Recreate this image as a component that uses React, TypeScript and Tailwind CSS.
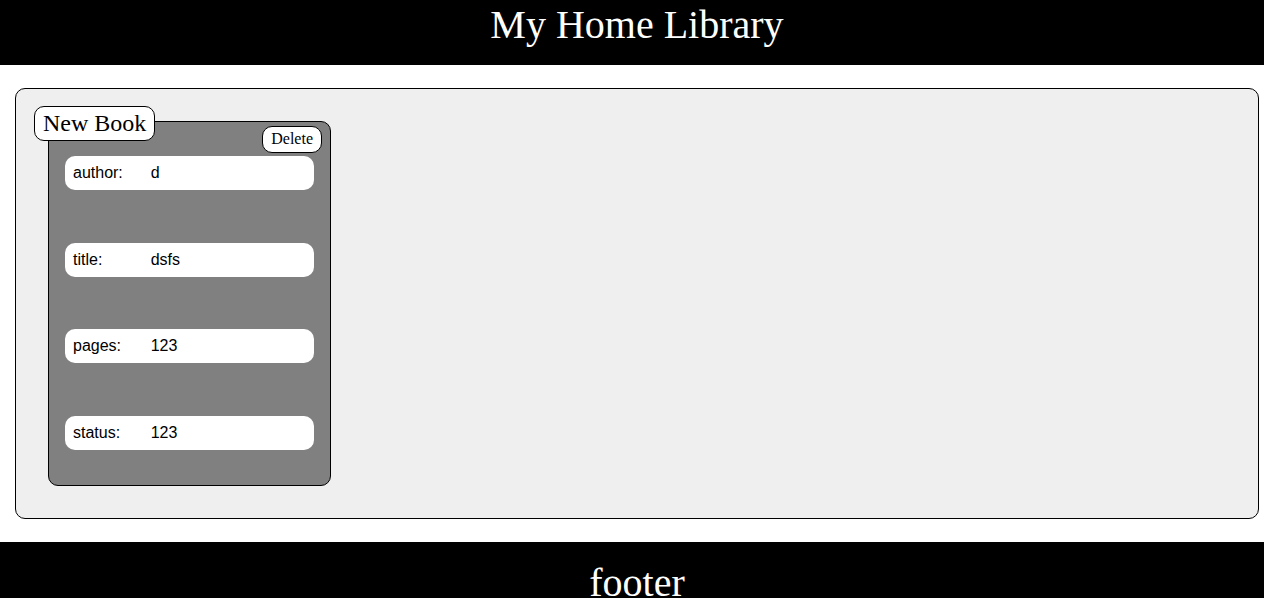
const details = [
  { label: "author:", value: "d" },
  { label: "title:", value: "dsfs" },
  { label: "pages:", value: "123" },
  { label: "status:", value: "123" },
];

function BookCard() {
  return (
    <article className="relative w-[283px] rounded-[10px] border border-black bg-[#808080] px-4 pb-[35px] pt-[34px]">
      <button
        type="button"
        className="absolute right-2 top-1 rounded-[10px] border border-black bg-white px-2 pb-px font-['Liberation_Serif',serif] text-base leading-6"
      >
        Delete
      </button>
      <dl className="flex min-h-[294px] flex-col justify-between font-['Liberation_Sans',sans-serif] text-base leading-[18px]">
        {details.map((item) => (
          <div key={item.label} className="flex rounded-[10px] bg-white p-2">
            <dt className="w-1/3">{item.label}</dt>
            <dd>{item.value}</dd>
          </div>
        ))}
      </dl>
    </article>
  );
}

export default function App() {
  return (
    <div className="flex min-h-screen flex-col bg-white font-['Liberation_Serif',serif] text-black">
      <header className="bg-black pb-4 pl-[10px] pt-px text-center text-white">
        <h1 className="text-[40px] leading-[48px]">My Home Library</h1>
      </header>
      <main className="relative mb-[23px] ml-[15px] mr-[5px] mt-[23px] rounded-[10px] border border-black bg-[#efefef] p-8">
        <button
          type="button"
          className="absolute left-[18px] top-[17px] z-10 rounded-[10px] border border-black bg-white px-2 text-2xl leading-[33px]"
        >
          New Book
        </button>
        <BookCard />
      </main>
      <footer className="grow bg-black pl-[10px] pt-[17px] text-center text-[40px] leading-[48px] text-white">
        footer
      </footer>
    </div>
  );
}
